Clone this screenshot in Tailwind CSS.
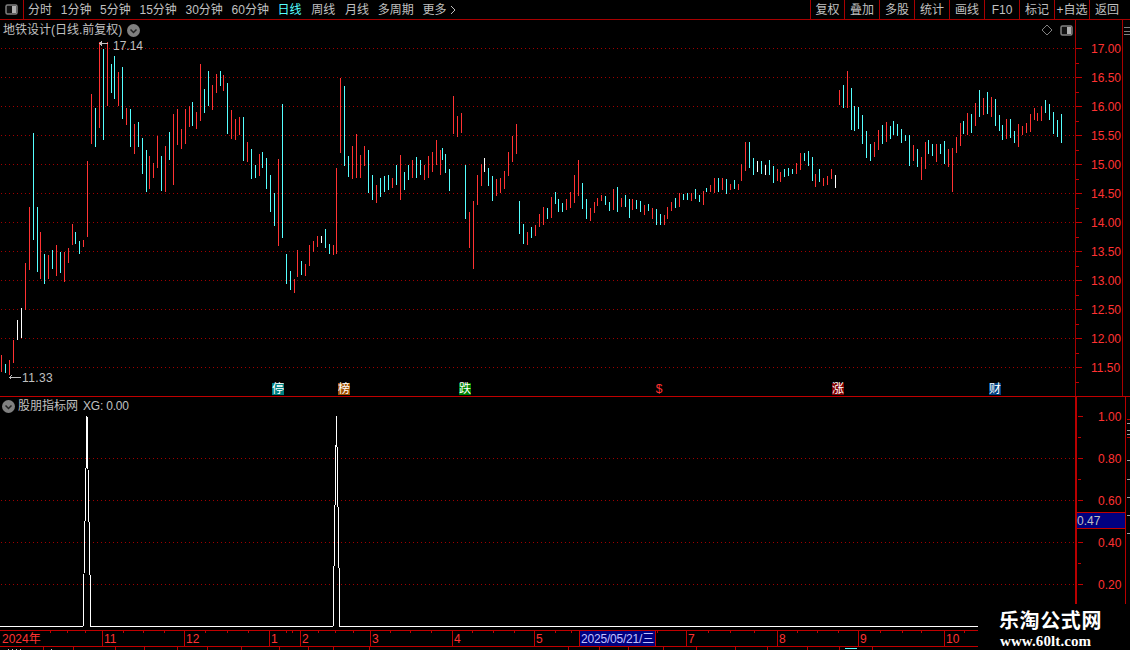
<!DOCTYPE html>
<html lang="en">
<head>
    <meta charset="UTF-8">
    <title>K线图</title>
    <script src="https://cdn.jsdelivr.net/npm/@tailwindcss/browser@4"></script>
</head>
<body class="bg-black">
<div class="relative w-[1130px] h-[650px] overflow-hidden flex flex-col bg-black text-[12px] leading-[14px] text-[#c0c0c0] font-['Liberation_Sans','Noto_Sans_CJK_SC',sans-serif]">

    <!-- top toolbar -->
    <div class="h-[20px] shrink-0 flex border-b border-[#a80000]">
        <div class="w-[24px] flex items-center justify-center border-r border-[#a80000]">
            <svg width="13" height="11" viewBox="0 0 13 11"><rect x="1" y="1" width="11" height="9" rx="1.5" fill="#111" stroke="#808080" stroke-width="1.5"/><rect x="7" y="2" width="4" height="7" fill="#b0b0b0"/></svg>
        </div>
        <div class="flex items-center gap-[8.7px] pl-[4px]">
            <span>分时</span><span>1分钟</span><span>5分钟</span><span>15分钟</span><span>30分钟</span><span>60分钟</span>
            <span class="text-[#55ffff]">日线</span>
            <span class="ml-[1px]">周线</span><span class="ml-[1px]">月线</span><span>多周期</span>
            <span class="flex items-center gap-[4px]">更多<svg width="6" height="10" viewBox="0 0 6 10" fill="none"><path d="M1 1L5 5L1 9" stroke="#c0c0c0"/></svg></span>
        </div>
        <div class="ml-auto flex items-center h-full">
            <span class="w-[34px] h-full flex items-center justify-center border-l border-[#a80000]">复权</span>
            <span class="w-[35px] h-full flex items-center justify-center border-l border-[#a80000]">叠加</span>
            <span class="w-[35px] h-full flex items-center justify-center border-l border-[#a80000]">多股</span>
            <span class="w-[35px] h-full flex items-center justify-center border-l border-[#a80000]">统计</span>
            <span class="w-[35px] h-full flex items-center justify-center border-l border-[#a80000]">画线</span>
            <span class="w-[35px] h-full flex items-center justify-center border-l border-[#a80000]">F10</span>
            <span class="w-[35px] h-full flex items-center justify-center border-l border-[#a80000]">标记</span>
            <span class="w-[35px] h-full flex items-center justify-center border-l border-[#a80000]">+自选</span>
            <span class="w-[41px] h-full flex items-center justify-center border-l border-[#a80000] pr-[6px]">返回</span>
        </div>
    </div>

    <!-- price panel -->
    <div class="h-[376px] shrink-0 flex">
        <div class="relative w-[1075px] shrink-0">
            <svg class="absolute inset-0" width="1075" height="376" viewBox="0 20 1075 376" fill="none" shape-rendering="crispEdges">
                <path stroke="#a00000" stroke-dasharray="1 3" d="M1 48.5H1075M1 77.5H1075M1 106.5H1075M1 135.5H1075M1 164.5H1075M1 193.5H1075M1 222.5H1075M1 251.5H1075M1 280.5H1075M1 309.5H1075M1 338.5H1075M1 367.5H1075"/>
                <g transform="translate(.5 0)">
                    <path stroke="#ff3232" d="M1 355V372M9 360V375M13 340V363M25 263V310M29 207V270M40 232V279M48 255V279M56 245V276M64 252V282M68 248V263M72 224V245M83 240V247M87 161V237M91 94V144M99 42V128M107 42V106M118 72V106M126 108V125M134 124V154M149 156V189M153 163V178M157 136V168M165 146V192M173 114V185M177 109V145M181 129V149M185 109V144M189 106V127M196 112V129M200 64V121M212 85V110M216 74V93M223 75V91M231 110V139M235 119V140M239 117V135M247 142V162M259 154V176M278 159V246M294 279V293M297 250V277M305 264V276M309 245V266M313 241V252M317 236V247M333 245V255M336 168V254M340 78V153M352 146V179M356 134V178M360 155V178M364 146V166M376 185V203M392 178V188M400 155V200M412 160V178M424 165V180M428 156V178M432 152V172M436 140V165M440 150V175M453 96V134M457 116V137M461 113V133M469 212V248M473 201V269M477 175V205M481 164V186M496 179V196M500 178V193M504 171V189M508 152V176M512 136V162M516 124V154M527 232V245M535 225V236M539 214V227M543 207V225M551 197V218M566 199V210M570 192V208M574 175V203M578 160V196M590 208V221M594 202V213M597 198V206M601 195V201M613 189V210M621 198V207M632 199V210M644 205V215M652 208V219M664 215V225M667 207V219M671 202V211M679 193V207M691 193V201M703 191V205M710 185V192M714 178V193M722 178V190M730 184V190M738 184V190M741 164V181M745 142V171M777 169V181M780 172V182M796 163V174M800 153V170M815 174V187M823 178V186M827 176V185M831 169V179M839 90V105M847 71V108M874 142V157M878 130V150M886 122V142M913 145V161M921 157V180M925 142V169M936 144V162M948 149V167M952 148V192M956 137V153M960 123V146M967 113V135M975 103V126M983 98V115M991 97V117M1006 119V139M1018 124V147M1022 126V135M1026 123V133M1030 114V132M1034 108V120M1037 113V121M1041 106V121"/>
                    <path stroke="#55ffff" d="M5 364V373M33 133V240M37 207V272M44 254V284M52 250V269M60 252V273M75 232V244M79 241V254M95 108V147M103 49V140M111 64V93M114 56V99M122 67V119M130 109V147M138 122V147M142 138V174M146 150V192M161 156V191M169 132V160M192 102V126M204 89V113M208 71V106M220 71V86M227 83V134M243 117V161M251 149V179M255 165V178M262 152V168M266 158V189M270 175V212M274 193V226M282 104V238M286 254V284M290 271V290M301 261V275M325 229V248M329 244V254M344 86V166M348 156V177M368 150V193M372 175V200M380 178V197M384 176V192M388 175V190M396 165V185M404 172V190M408 165V180M416 157V178M420 160V175M442 148V160M445 154V173M449 169V191M465 165V219M488 168V186M492 176V201M519 201V234M523 224V244M531 227V238M547 208V219M555 192V204M558 199V212M562 203V212M582 183V209M586 199V219M605 196V205M609 202V211M617 187V212M625 195V207M629 199V218M636 200V209M640 201V212M648 204V211M656 209V225M660 214V225M675 198V208M683 194V200M687 193V200M695 189V199M699 195V202M706 188V192M718 178V192M726 179V194M734 180V189M749 142V168M753 158V175M761 161V174M769 160V175M773 166V183M784 169V177M788 168V176M792 169V174M804 153V161M808 151V166M812 157V181M819 169V182M843 85V108M851 88V130M854 106V131M858 107V129M862 115V144M866 131V158M870 144V161M882 125V144M890 126V139M893 121V135M897 124V136M901 129V143M905 135V141M909 135V166M917 149V167M928 140V154M932 144V156M940 144V154M944 141V164M963 121V134M971 114V133M979 90V117M987 92V114M995 99V126M999 115V131M1002 125V140M1010 119V138M1014 131V143M1045 100V113M1049 104V120M1053 112V134M1057 120V137M1061 114V143"/>
                    <path stroke="#ffffff" d="M17 320V340M21 308V338M321 236V243M484 158V172M757 161V172M765 165V175M835 175V188"/>
                </g>
                <path stroke="#c0c0c0" d="M100 43.5H108M102 41.5L100 43.5L102 45.5M9.5 377.5H21M11.5 375.5L9.5 377.5L11.5 379.5"/>
            </svg>

            <div class="relative pl-[3px] pt-[3px] flex items-center gap-[5px]">
                <span>地铁设计(日线.前复权)</span>
                <svg width="13" height="13" viewBox="0 0 13 13"><circle cx="6.5" cy="6.5" r="6.5" fill="#808080"/><path d="M3.5 5.5L6.5 8.5L9.5 5.5" fill="none" stroke="#222" stroke-width="1.5"/></svg>
            </div>
            <div class="absolute right-[2px] top-[4px] flex items-center gap-[7px]">
                <svg width="12" height="12" viewBox="0 0 12 12"><path d="M6 1L11 6L6 11L1 6Z" fill="none" stroke="#808080"/></svg>
                <svg width="13" height="11" viewBox="0 0 13 11"><rect x="1" y="1" width="11" height="9" rx="1.5" fill="#111" stroke="#808080" stroke-width="1.5"/><rect x="7" y="2" width="4" height="7" fill="#b0b0b0"/></svg>
            </div>

            <span class="absolute left-[113px] top-[19px]">17.14</span>
            <span class="absolute left-[22px] top-[351px] tracking-[0.4px]">11.33</span>

            <span class="absolute left-[272px] top-[363px] w-[12px] h-[12px] flex items-center justify-center bg-[#008080] text-white">停</span>
            <span class="absolute left-[338px] top-[363px] w-[12px] h-[12px] flex items-center justify-center bg-[#a05000] text-white">榜</span>
            <span class="absolute left-[459px] top-[363px] w-[12px] h-[12px] flex items-center justify-center bg-[#008000] text-white">跌</span>
            <span class="absolute left-[653px] top-[363px] w-[12px] h-[12px] flex items-center justify-center text-[#ff3232]">$</span>
            <span class="absolute left-[832px] top-[363px] w-[12px] h-[12px] flex items-center justify-center bg-[#800000] text-white">涨</span>
            <span class="absolute left-[989px] top-[363px] w-[12px] h-[12px] flex items-center justify-center bg-[#004080] text-white">财</span>
        </div>

        <div class="relative w-[48px] shrink-0 border-x border-[#a80000] pt-[14px] text-[#ff3232]">
            <svg class="absolute -left-[1px] top-0" width="20" height="376" viewBox="1075 20 20 376" fill="none" shape-rendering="crispEdges">
                <path stroke="#c00000" d="M1076 48.5h6M1076 63.5h3M1076 77.5h6M1076 92.5h3M1076 106.5h6M1076 121.5h3M1076 135.5h6M1076 150.5h3M1076 164.5h6M1076 179.5h3M1076 193.5h6M1076 208.5h3M1076 222.5h6M1076 237.5h3M1076 251.5h6M1076 266.5h3M1076 280.5h6M1076 295.5h3M1076 309.5h6M1076 324.5h3M1076 338.5h6M1076 353.5h3M1076 367.5h6M1076 382.5h3"/>
            </svg>
            <div class="h-[29px] flex items-center pl-[15px]">17.00</div>
            <div class="h-[29px] flex items-center pl-[15px]">16.50</div>
            <div class="h-[29px] flex items-center pl-[15px]">16.00</div>
            <div class="h-[29px] flex items-center pl-[15px]">15.50</div>
            <div class="h-[29px] flex items-center pl-[15px]">15.00</div>
            <div class="h-[29px] flex items-center pl-[15px]">14.50</div>
            <div class="h-[29px] flex items-center pl-[15px]">14.00</div>
            <div class="h-[29px] flex items-center pl-[15px]">13.50</div>
            <div class="h-[29px] flex items-center pl-[15px]">13.00</div>
            <div class="h-[29px] flex items-center pl-[15px]">12.50</div>
            <div class="h-[29px] flex items-center pl-[15px]">12.00</div>
            <div class="h-[29px] flex items-center pl-[15px]">11.50</div>
        </div>
        <svg class="shrink-0" width="7" height="376" viewBox="0 0 7 376" fill="none" shape-rendering="crispEdges">
            <path stroke="#808080" d="M1 7.5h6M1 11.5h6M1 14.5h6"/>
        </svg>
    </div>

    <!-- indicator panel -->
    <div class="h-[234px] shrink-0 flex border-t border-[#c00000]">
        <div class="relative w-[1075px] shrink-0">
            <svg class="absolute left-0 -top-[1px]" width="1075" height="234" viewBox="0 396 1075 234" fill="none" shape-rendering="crispEdges">
                <path stroke="#a00000" stroke-dasharray="1 3" d="M1 458.5H1075M1 500.5H1075M1 542.5H1075M1 584.5H1075"/>
                <path stroke="#ffffff" d="M0 626.5H83L87 416L91 626.5H333L336.5 416L340 626.5H978"/>
            </svg>
            <div class="relative pl-[2px] pt-[2px] flex items-center gap-[3px]">
                <svg width="13" height="13" viewBox="0 0 13 13"><circle cx="6.5" cy="6.5" r="6.5" fill="#808080"/><path d="M3.5 5.5L6.5 8.5L9.5 5.5" fill="none" stroke="#222" stroke-width="1.5"/></svg>
                <span>股朋指标网</span>
                <span class="ml-[2px] tracking-[-0.2px]">XG: 0.00</span>
            </div>
        </div>
        <div class="relative w-[51px] shrink-0 border-l-2 border-r border-[#b80000] text-[#ff3232]">
            <svg class="absolute -left-[1px] -top-[1px]" width="20" height="234" viewBox="1075 396 20 234" fill="none" shape-rendering="crispEdges">
                <path stroke="#c00000" d="M1077 416.5h5M1077 437.5h3M1077 458.5h5M1077 479.5h3M1077 500.5h5M1077 521.5h3M1077 542.5h5M1077 563.5h3M1077 584.5h5M1077 605.5h3"/>
            </svg>
            <div class="absolute left-[21px] top-[13px]">1.00</div>
            <div class="absolute left-[21px] top-[55px]">0.80</div>
            <div class="absolute left-[21px] top-[97px]">0.60</div>
            <div class="absolute left-0 top-[115px] w-full h-[17px] flex items-center border-y border-[#c00000] bg-[#000080] text-[#c0c0c0]">0.47</div>
            <div class="absolute left-[21px] top-[139px]">0.40</div>
            <div class="absolute left-[21px] top-[181px]">0.20</div>
        </div>
        <svg class="shrink-0" width="4" height="233" viewBox="0 397 4 233" fill="none" shape-rendering="crispEdges">
            <path stroke="#c00000" d="M1 419.5h3M1 437.5h3"/>
            <path stroke="#a0a0a0" d="M1 423.5h3M1 430.5h3M1 434.5h3M1 460.5h3M1 479.5h3M1 497.5h3M1 515.5h3M1 533.5h3"/>
        </svg>
    </div>

    <!-- time axis -->
    <div class="relative w-[978px] h-[17px] shrink-0 flex border-y border-[#c00000] text-[#ff3232]">
        <span class="w-[102px] pl-[2px] flex items-center">2024年</span>
        <span class="w-[82px] pl-[1px] flex items-center border-l border-[#c00000]">11</span>
        <span class="w-[85px] pl-[1px] flex items-center border-l border-[#c00000]">12</span>
        <span class="w-[31px] pl-[1px] flex items-center border-l border-[#c00000]">1</span>
        <span class="w-[70px] pl-[1px] flex items-center border-l border-[#c00000]">2</span>
        <span class="w-[82px] pl-[1px] flex items-center border-l border-[#c00000]">3</span>
        <span class="w-[82px] pl-[1px] flex items-center border-l border-[#c00000]">4</span>
        <span class="w-[45px] pl-[1px] flex items-center border-l border-[#c00000]">5</span>
        <span class="w-[77px] flex items-center justify-center border-x border-[#c00000] bg-[#000080] text-[#c0c0ff] tracking-[-0.2px]">2025/05/21/三</span>
        <span class="w-[30px]"></span>
        <span class="w-[91px] pl-[1px] flex items-center border-l border-[#c00000]">7</span>
        <span class="w-[81px] pl-[1px] flex items-center border-l border-[#c00000]">8</span>
        <span class="w-[86px] pl-[1px] flex items-center border-l border-[#c00000]">9</span>
        <span class="w-[34px] pl-[1px] flex items-center border-l border-[#c00000]">10</span>
        <svg class="absolute left-0 top-0" width="978" height="3" viewBox="0 0 978 3" fill="none" shape-rendering="crispEdges">
            <path stroke="#c00000" d="M50.5 0v2M67.5 0v2M85.5 0v2M123.5 0v2M143.5 0v2M164.5 0v2M205.5 0v2M227.5 0v2M248.5 0v2M286.5 0v2M292.5 0v2M318.5 0v2M335.5 0v2M353.5 0v2M390.5 0v2M410.5 0v2M431.5 0v2M472.5 0v2M493.5 0v2M514.5 0v2M555.5 0v2M571.5 0v2M657.5 0v2M708.5 0v2M730.5 0v2M754.5 0v2M797.5 0v2M817.5 0v2M838.5 0v2M880.5 0v2M902.5 0v2M921.5 0v2M964.5 0v2"/>
        </svg>
    </div>

    <!-- status row, cut off by the window -->
    <div class="flex-1 relative">
        <svg class="absolute left-0 top-0" width="978" height="3" viewBox="0 647 978 3" fill="none" shape-rendering="crispEdges">
            <path stroke="#c00000" d="M43.5 647v3M73.5 647v3M115.5 647v3M144.5 647v3M177.5 647v3M207.5 647v3M241.5 647v3M279.5 647v3M308.5 647v3M333.5 647v3M369.5 647v3M568.5 647v3M599.5 647v3M628.5 647v3M663.5 647v3M696.5 647v3M735.5 647v3M767.5 647v3M807.5 647v3M839.5 647v3M872.5 647v3"/>
            <path stroke="#c0c0c0" d="M8 649.5h1M12 649.5h1M16 649.5h1M20 649.5h1M51 649.5h1"/>
            <path stroke="#55ffff" d="M845 648.5h12"/>
        </svg>
    </div>

    <!-- watermark -->
    <div class="absolute right-0 bottom-0 w-[152px] h-[46px] bg-black text-white flex flex-col pl-[21px]">
        <span class="h-[29px] pt-[5px] text-[20px] leading-[22px] font-bold tracking-[0.6px] font-['Noto_Sans_CJK_SC',sans-serif]">乐淘公式网</span>
        <span class="text-[15px] leading-[16px] font-bold pl-[1px] tracking-[0.1px] font-['Liberation_Serif',serif]">www.60lt.com</span>
    </div>
</div>
</body>
</html>
